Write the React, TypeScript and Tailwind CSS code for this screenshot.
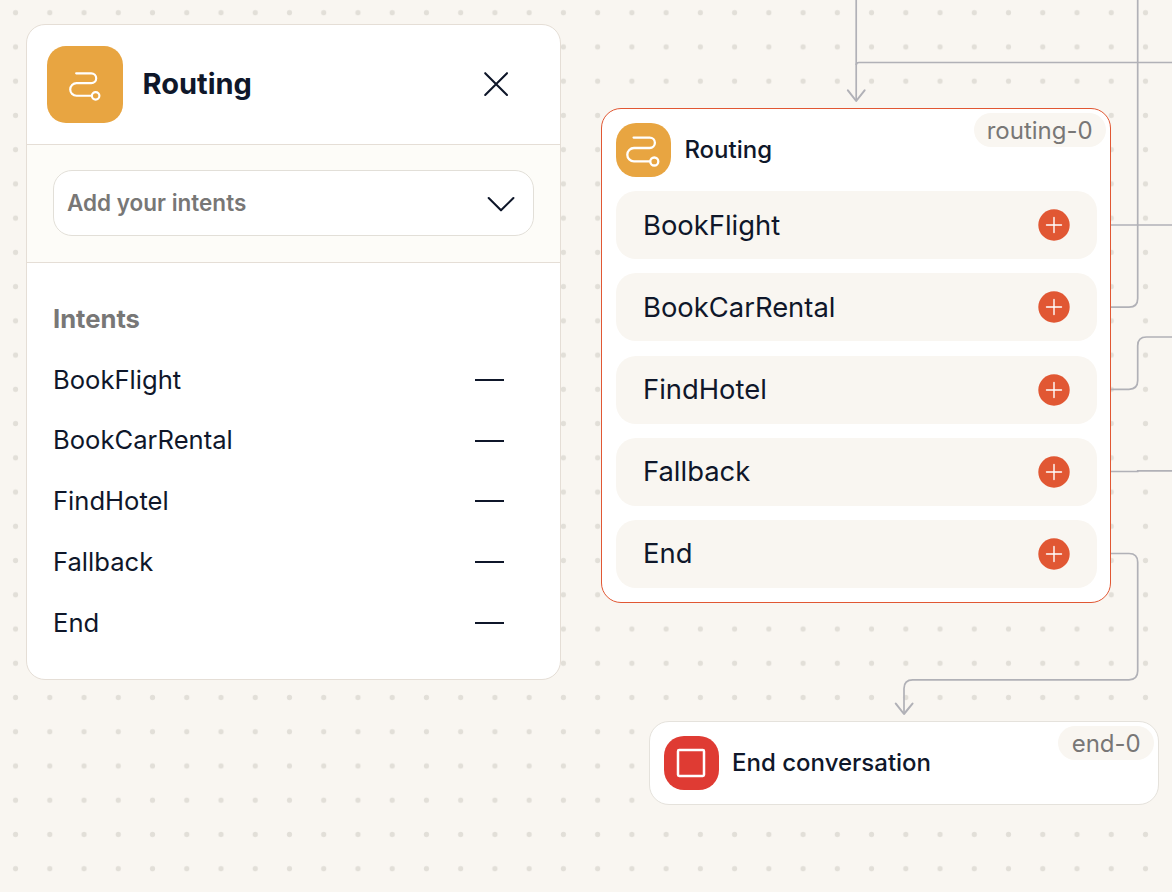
import React from "react";

const INTENTS = ["BookFlight", "BookCarRental", "FindHotel", "Fallback", "End"];

function RouteIcon({ size }: { size: number }) {
  return (
    <svg width={size} height={size} viewBox="0 0 34 34" fill="none" stroke="white" strokeWidth="2.3" strokeLinecap="round">
      <path d="M7.6 4.6H23.7A5.2 5.2 0 0 1 23.7 15H8A6.7 6.7 0 0 0 8 28.4H24" />
      <circle cx="28.3" cy="28.5" r="4" />
    </svg>
  );
}

function PlusBadge() {
  return (
    <svg width="32" height="32" viewBox="0 0 32 32" fill="none" className="shrink-0">
      <circle cx="16" cy="16" r="15.7" fill="#e15733" />
      <path d="M8.5 16H23.5M16 8.5V23.5" stroke="white" strokeWidth="1.4" strokeLinecap="round" />
    </svg>
  );
}

function Canvas() {
  return (
    <svg className="absolute inset-0" width="1172" height="892" fill="none">
      <defs>
        <pattern id="dots" x="-1.55" y="-4.42" width="34.24" height="34.24" patternUnits="userSpaceOnUse">
          <circle cx="17.12" cy="17.12" r="2.6" fill="#e2dfd8" />
        </pattern>
      </defs>
      <rect width="1172" height="892" fill="url(#dots)" />
      <g stroke="#b1b1b7" strokeWidth="1.7">
        <path d="M856.2 0V100" />
        <path d="M1172 62.5H859Q856.2 62.5 856.2 65" />
        <path d="M1111 225H1172" />
        <path d="M1111 307.2H1129Q1137.7 307.2 1137.7 298.5V0" />
        <path d="M1111 389.3H1129Q1137.7 389.3 1137.7 380.6V345.7Q1137.7 337 1146.4 337H1172" />
        <path d="M1111 471.5H1137.7V470.8H1172" />
        <path d="M1111 553.5H1129Q1137.7 553.5 1137.7 562.2V671.1Q1137.7 679.8 1129 679.8H912.7Q904 679.8 904 688.5V713" />
        <path d="M847.9 90.3L856.2 101L864.6 90.3M895.8 703.6L904 714L912.5 703.6" strokeWidth="2" strokeLinecap="round" strokeLinejoin="round" />
      </g>
    </svg>
  );
}

function SidePanel() {
  return (
    <aside className="absolute left-[26px] top-[24px] flex h-[656px] w-[535px] flex-col overflow-hidden rounded-[19px] border border-[#e5ded6] bg-white">
      <header className="flex h-[120px] shrink-0 items-center border-b border-[#e5ded6] pl-5 pr-[50px]">
        <div className="flex h-[77px] w-[76px] items-center justify-center rounded-[19px] bg-[#e8a541]">
          <RouteIcon size={32} />
        </div>
        <h1 className="-mt-0.5 ml-[19.5px] grow text-[29px] font-bold leading-9">Routing</h1>
        <svg className="-mt-0.5" width="28" height="28" viewBox="0 0 28 28" fill="none" stroke="#0f172a" strokeWidth="2.1" strokeLinecap="round">
          <path d="M3.2 3.2L25 25M25 3.2L3.2 25" />
        </svg>
      </header>
      <section className="flex h-[118px] shrink-0 items-start border-b border-[#e5ded6] bg-[#fdfcf8] px-[26px] pt-[25px]">
        <button className="flex h-[66px] w-full items-center justify-between rounded-[19px] border border-[#e2dfd8] bg-white pl-[13px] pr-[17px] text-[22.5px] font-semibold text-[#787776]">
          <span>Add your intents</span>
          <svg className="mt-0.5" width="30" height="18" viewBox="0 0 30 18" fill="none" stroke="#0f172a" strokeWidth="2.1" strokeLinecap="round" strokeLinejoin="round">
            <path d="M2.7 3L15 15.3L27.4 3" />
          </svg>
        </button>
      </section>
      <section className="flex flex-col px-[26px] pt-[39px]">
        <h2 className="text-[25.6px] font-bold leading-[34px] text-[#787776]">Intents</h2>
        <ul className="mt-[13.4px] flex flex-col">
          {INTENTS.map((name) => (
            <li key={name} className="flex h-[60.8px] items-center justify-between pr-[30px] text-[25.6px]">
              <span>{name}</span>
              <svg width="29" height="2" viewBox="0 0 29 2"><path d="M0 1H29" stroke="#0f172a" strokeWidth="2" /></svg>
            </li>
          ))}
        </ul>
      </section>
    </aside>
  );
}

function NodeTag({ children }: { children: React.ReactNode }) {
  return (
    <span className="absolute right-[4.5px] top-[4.2px] flex h-[34px] items-center rounded-full bg-[#f9f6f1] px-[13.2px] pt-[2px] text-[24px] text-[#787776]">
      {children}
    </span>
  );
}

function RoutingNode() {
  return (
    <article className="absolute left-[601.4px] top-[107.6px] flex h-[495.4px] w-[510px] flex-col rounded-[20px] border border-[#e15733] bg-white px-[13.6px] pt-[14px]">
      <NodeTag>routing-0</NodeTag>
      <div className="flex items-center gap-[13.6px]">
        <div className="flex h-[54.6px] w-[54.8px] items-center justify-center rounded-[20px] bg-[#e8a541]">
          <RouteIcon size={34} />
        </div>
        <h2 className="text-[24px] font-medium">Routing</h2>
      </div>
      <ul className="mt-[14px] flex flex-col gap-[14.2px]">
        {INTENTS.map((name) => (
          <li key={name} className="flex h-[68px] items-center justify-between rounded-[20px] bg-[#f9f6f1] pl-[27px] pr-[27px] text-[27.4px]">
            <span>{name}</span>
            <PlusBadge />
          </li>
        ))}
      </ul>
    </article>
  );
}

function EndNode() {
  return (
    <article className="absolute left-[649.4px] top-[721.2px] flex h-[84px] w-[510px] items-center gap-[13.5px] rounded-[20px] border border-[#e5e2dc] bg-white px-[13.6px]">
      <NodeTag>end-0</NodeTag>
      <div className="flex h-[54.6px] w-[54.6px] items-center justify-center rounded-[20px] bg-[#df3b33]">
        <svg width="30" height="30" viewBox="0 0 30 30" fill="none">
          <rect x="2" y="2" width="26" height="26" rx="1.2" stroke="white" strokeWidth="2.5" />
        </svg>
      </div>
      <h2 className="text-[24px] font-medium">End conversation</h2>
    </article>
  );
}

export default function App() {
  return (
    <main className="relative h-[892px] w-[1172px] overflow-hidden bg-[#f9f6f1] font-['Inter',sans-serif] text-[#0f172a]">
      <Canvas />
      <SidePanel />
      <RoutingNode />
      <EndNode />
    </main>
  );
}
